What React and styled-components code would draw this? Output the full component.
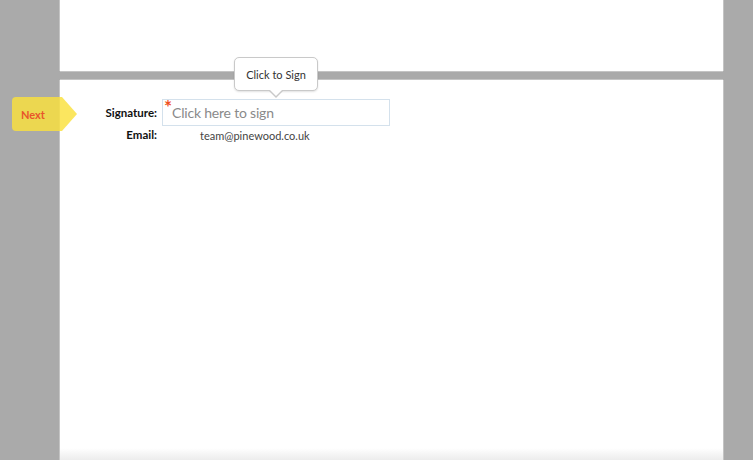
import React from "react";
import styled, { createGlobalStyle } from "styled-components";

const GlobalStyle = createGlobalStyle`
  html, body {
    margin: 0;
    padding: 0;
    background: #aaaaaa;
    font-family: Lato, "Open Sans", "Liberation Sans", sans-serif;
  }
`;

function App() {
  return (
    <>
      <GlobalStyle />
      <Viewer>
        <TopPage />
        <Page>
          <Form>
            <Label>Signature:</Label>
            <SignField>
              <Asterisk>*</Asterisk>
              <Placeholder>Click here to sign</Placeholder>
              <Tooltip>Click to Sign</Tooltip>
            </SignField>
            <Label>Email:</Label>
            <Value>team@pinewood.co.uk</Value>
          </Form>
        </Page>
        <NextTag>Next</NextTag>
      </Viewer>
    </>
  );
}

export default App;

const Viewer = styled.div`
  position: relative;
  display: flex;
  flex-direction: column;
  gap: 9px;
  width: 753px;
  height: 460px;
  padding: 0 30px 0 60px;
  box-sizing: border-box;
  overflow: hidden;
`;

const TopPage = styled.div`
  height: 71px;
  background: #ffffff;
  box-shadow: -1px 0 0 #c4c4c4, 1px 0 0 #c4c4c4, 0 1px 0 #c4c4c4;
`;

const Page = styled.div`
  flex: 1;
  background: linear-gradient(to bottom, #ffffff 0, #ffffff 368px, #ececec 100%);
  box-shadow: -1px 0 0 #c4c4c4, 1px 0 0 #c4c4c4, 0 -1px 0 #c4c4c4;
  padding-top: 19px;
`;

const Form = styled.div`
  display: grid;
  grid-template-columns: 97px 228px;
  column-gap: 5px;
  row-gap: 0;
  align-items: center;
`;

const Label = styled.div`
  text-align: right;
  font-size: 11.5px;
  font-weight: 700;
  color: #111;
`;

const SignField = styled.div`
  position: relative;
  height: 27px;
  border: 1px solid #d4e1ec;
  box-sizing: border-box;
  display: flex;
  align-items: center;
  padding-left: 9px;
`;

const Asterisk = styled.span`
  position: absolute;
  left: 1px;
  top: -3px;
  color: #f0501e;
  font-size: 19px;
  line-height: 19px;
  font-weight: 700;
`;

const Placeholder = styled.span`
  font-size: 14px;
  color: #8a8a8a;
  letter-spacing: -0.2px;
`;

const Tooltip = styled.div`
  position: absolute;
  left: 71px;
  top: -43px;
  width: 84px;
  height: 34px;
  box-sizing: border-box;
  background: #fff;
  border: 1px solid #c9c9c9;
  border-radius: 5px;
  box-shadow: 0 1px 2px rgba(0, 0, 0, 0.12);
  display: flex;
  align-items: center;
  justify-content: center;
  font-size: 11px;
  color: #333;

  &::before,
  &::after {
    content: "";
    position: absolute;
    left: 50%;
    transform: translateX(-50%);
    border-style: solid;
  }
  &::before {
    bottom: -8px;
    border-width: 8px 8px 0 8px;
    border-color: #c9c9c9 transparent transparent transparent;
  }
  &::after {
    bottom: -6px;
    border-width: 7px 7px 0 7px;
    border-color: #fff transparent transparent transparent;
  }
`;

const Value = styled.div`
  padding: 3px 0 0 38px;
  font-size: 11px;
  color: #444;
`;

const NextTag = styled.div`
  position: absolute;
  left: 12px;
  top: 97px;
  width: 50px;
  height: 34px;
  box-sizing: border-box;
  padding-left: 9px;
  display: flex;
  align-items: center;
  background: rgba(250, 225, 60, 0.82);
  border-radius: 4px 0 0 4px;
  font-size: 11px;
  font-weight: 700;
  color: #e8552b;

  &::after {
    content: "";
    position: absolute;
    left: 100%;
    top: 0;
    border-style: solid;
    border-width: 17px 0 17px 15px;
    border-color: transparent transparent transparent rgba(250, 225, 60, 0.82);
  }
`;
